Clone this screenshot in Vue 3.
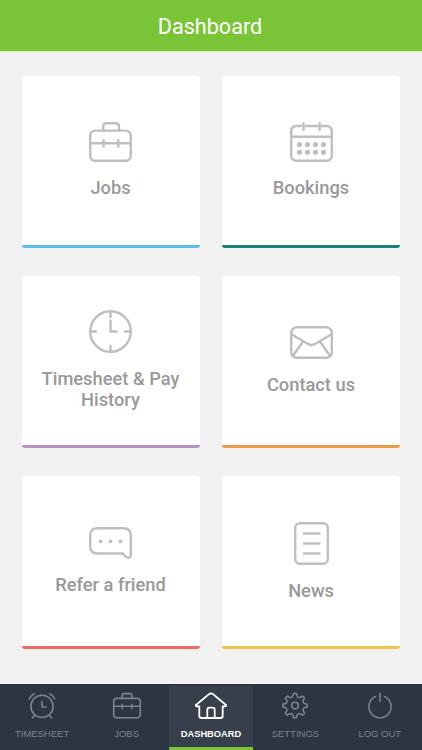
<template>
  <div class="app">
    <header class="header">
      <h1>Dashboard</h1>
    </header>

    <main class="grid">
      <a v-for="card in cards" :key="card.label" href="#" class="card" :class="card.icon">
        <svg v-if="card.icon === 'jobs'" class="icon" width="43" height="40" viewBox="0 0 43 40">
          <rect x="1.2" y="8.6" width="40.6" height="30.2" rx="5" />
          <path d="M14.2 8.6V4.6q0-3.4 3.4-3.4h9q3.4 0 3.4 3.4v4M1.1 21.2h12.2M16 21.2h11.6M30.4 21.2h11.5M14.6 18.2v6.4M29.3 18.2v6.4" />
        </svg>
        <svg v-else-if="card.icon === 'bookings'" class="icon" width="43" height="40" viewBox="0 0 43 40">
          <path d="M11 4H6.7q-5.5 0-5.5 5.5v23.8q0 5.5 5.500 5.500h29.600q5.500 0 5.500-5.500V9.500q0-5.500-5.500-5.500H32M16 4h11.500M1.200 14.800h40.600M13.500 1.200v6.800M29.700 1.200v6.800" />
          <g class="dots">
            <circle v-for="n in 8" :key="n" :cx="9.5 + ((n - 1) % 4) * 8" :cy="n > 4 ? 30.3 : 22.6" r="2.6" />
          </g>
        </svg>
        <svg v-else-if="card.icon === 'history'" class="icon" width="43" height="43" viewBox="0 0 43 43">
          <circle cx="21.5" cy="21.5" r="20.3" />
          <path d="M21.5 1v6M21.5 36v6M1 21.5h6M36 21.5h6M21.5 10.8v10.7h5.8" />
        </svg>
        <svg v-else-if="card.icon === 'contact'" class="icon" width="43" height="33" viewBox="0 0 43 33">
          <rect x="1.2" y="1.2" width="40.6" height="30.6" rx="5.5" />
          <path d="M1.5 8.3L18 18q3.5 2 7 0L41.5 8.3M13 15.5L2.8 30M30 15.5L40.2 30" />
        </svg>
        <svg v-else-if="card.icon === 'refer'" class="icon" width="43" height="32" viewBox="0 0 43 32">
          <path d="M8.5 1.2h26q7.3 0 7.3 7.4v19.7c0 2.5-3 3.3-4.7 1.5L33.5 26.500H8.500q-7.300 0-7.300-7.400V8.600q0-7.400 7.300-7.400z" />
          <g class="dots">
            <circle cx="11.5" cy="14.3" r="1.9" />
            <circle cx="21.5" cy="14.3" r="1.9" />
            <circle cx="31.5" cy="14.3" r="1.9" />
          </g>
        </svg>
        <svg v-else class="icon" width="35" height="43" viewBox="0 0 35 43">
          <rect x="1.2" y="1.2" width="32.6" height="40.6" rx="4.5" />
          <path d="M10 11.5h15.5M10 21.5h15.5M10 31.5h15.5" />
        </svg>
        <span class="label">{{ card.label }}</span>
      </a>
    </main>

    <nav class="tabbar">
      <a v-for="tab in tabs" :key="tab" href="#" class="tab" :class="{ active: tab === activeTab }" @click.prevent="activeTab = tab">
        <svg class="tab-icon" width="32" height="28" viewBox="0 0 32 28">
          <g v-if="tab === 'Timesheet'">
            <circle cx="16" cy="14.4" r="11.1" />
            <path d="M16 9.5V15h4M8.8 23.2L6.4 25.8M23.2 23.2l2.4 2.6M3.2 6.8Q4.9 3.5 8.3 1.8M28.8 6.8Q27.1 3.5 23.7 1.8" />
          </g>
          <g v-else-if="tab === 'Jobs'">
            <rect x="2.7" y="6.4" width="26.6" height="19.4" rx="3" />
            <path d="M11 6.4V3.8q0-2.2 2.2-2.2h5.6q2.2 0 2.2 2.2v2.6M2.7 14.3h7.5M12.2 14.3h7.6M21.8 14.3h7.5M11.2 12.3v4.5M20.8 12.3v4.5" />
          </g>
          <g v-else-if="tab === 'Dashboard'">
            <path d="M4.3 14.3H1.7q-1.5-.4-.4-1.6L14.3 1.9q1.7-1.2 3.4 0L30.7 12.7q1.1 1.2-.4 1.6H27.7v9.4q0 2.3-2.3 2.3H6.6q-2.3 0-2.3-2.3z" />
            <path d="M12.3 26v-8.4q0-2 2-2h3.4q2 0 2 2V26" />
          </g>
          <g v-else-if="tab === 'Settings'">
            <path :d="gearPath" />
            <circle cx="16" cy="13.6" r="3.3" />
          </g>
          <g v-else>
            <path d="M16 1.5v7.8M11.4 4.5a11.1 11.1 0 1 0 9.2 0" />
          </g>
        </svg>
        <span class="tab-label">{{ tab }}</span>
      </a>
    </nav>
  </div>
</template>

<script setup>
import { ref } from 'vue';

const cards = [
  { icon: 'jobs', label: 'Jobs' },
  { icon: 'bookings', label: 'Bookings' },
  { icon: 'history', label: 'Timesheet & Pay History' },
  { icon: 'contact', label: 'Contact us' },
  { icon: 'refer', label: 'Refer a friend' },
  { icon: 'news', label: 'News' }
];

const tabs = ['Timesheet', 'Jobs', 'Dashboard', 'Settings', 'Log out'];
const activeTab = ref('Dashboard');

// eight teeth, each one a flat tip between two rounded valleys
const point = (radius, deg) => {
  const a = (deg * Math.PI) / 180;
  return `${(16 + radius * Math.cos(a)).toFixed(2)} ${(13.6 + radius * Math.sin(a)).toFixed(2)}`;
};

let gearPath = '';
for (let i = 0; i < 8; i++) {
  const a = i * 45;
  gearPath += `${i ? 'L' : 'M'}${point(12.1, a - 7)}Q${point(12.4, a)} ${point(12.1, a + 7)}`;
  gearPath += `L${point(10.2, a + 11)}C${point(8.6, a + 16)} ${point(8.6, a + 29)} ${point(10.2, a + 34)}`;
}
gearPath += 'Z';
</script>

<style>
body {
  margin: 0;
}
</style>

<style scoped>
.app {
  display: flex;
  flex-direction: column;
  height: 750px;
  background: #f1f1f1;
  font-family: Roboto, "Liberation Sans", sans-serif;
}

a {
  text-decoration: none;
}

.header {
  display: flex;
  align-items: center;
  justify-content: center;
  height: 51px;
  padding: 1px 2px 0 0;
  box-sizing: border-box;
  background: #7ac537;
  box-shadow: 0 1px 0 #d3efb9;
}

.header h1 {
  margin: 0;
  color: #fff;
  font-size: 21.6px;
  font-weight: 400;
}

.grid {
  flex: 1;
  display: grid;
  grid-template-columns: 1fr 1fr;
  grid-template-rows: 172px 172px 173px;
  gap: 28px 22.5px;
  padding: 25px 22px 0 21.5px;
}

.card {
  display: flex;
  flex-direction: column;
  align-items: center;
  justify-content: center;
  gap: 15px;
  padding: 0 14px;
  background: #fff;
  border-bottom: 3px solid;
  border-radius: 3px;
}

.jobs { border-color: #5bc0e6; }
.bookings { border-color: #128577; }
.history { border-color: #b494c6; }
.contact { border-color: #ef9a48; }
.refer { border-color: #ec6a60; }
.news { border-color: #efc748; }

.jobs,
.bookings,
.history {
  padding-bottom: 2px;
}

.icon {
  fill: none;
  stroke: #bfbfbf;
  stroke-width: 2.4;
  stroke-linecap: round;
  stroke-linejoin: round;
}

.dots {
  fill: #bfbfbf;
  stroke: none;
}

.label {
  color: #999;
  font-size: 18.3px;
  font-weight: 500;
  line-height: 21px;
  text-align: center;
}

.tabbar {
  display: grid;
  grid-template-columns: repeat(5, 1fr);
  height: 66px;
  background: #2c3643;
  border-top: 1px solid #252d38;
  box-shadow: 0 -1px 0 #fafafa;
  box-sizing: border-box;
}

.tab {
  display: flex;
  flex-direction: column;
  align-items: center;
  padding-top: 7px;
  color: #7c838d;
  border-bottom: 3px solid transparent;
}

.tab.active {
  color: #fff;
  background: #383f4c;
  border-bottom-color: #7ac537;
}

.tab-icon {
  fill: none;
  stroke: currentColor;
  stroke-width: 1.6;
  stroke-linecap: round;
  stroke-linejoin: round;
}

.active .tab-icon {
  stroke-width: 1.8;
}

.tab-label {
  margin-top: 8px;
  font-family: "Liberation Sans", Arial, sans-serif;
  font-size: 9.5px;
  line-height: 12px;
  text-transform: uppercase;
}

.active .tab-label {
  font-size: 9.3px;
  font-weight: 700;
}
</style>
